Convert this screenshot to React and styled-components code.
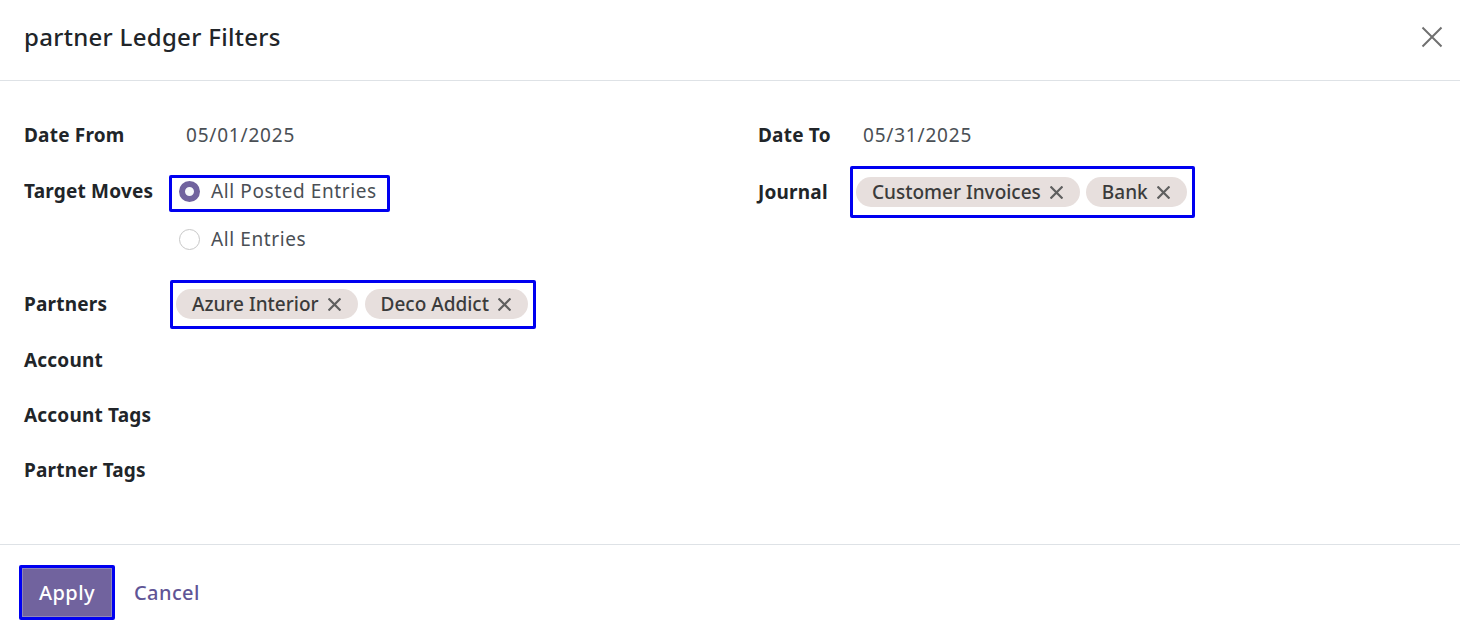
import React from 'react';
import styled, { createGlobalStyle } from 'styled-components';

const GlobalStyle = createGlobalStyle`
  html, body {
    margin: 0;
    padding: 0;
    background: #ffffff;
  }
  body {
    font-family: 'Noto Sans', 'Open Sans', sans-serif;
    color: #212529;
  }
`;

const Modal = styled.div`
  width: 1460px;
  height: 636px;
  display: flex;
  flex-direction: column;
  background: #fff;
`;

const Header = styled.div`
  height: 81px;
  border-bottom: 1px solid #dee2e6;
  display: flex;
  align-items: center;
  justify-content: space-between;
  padding: 0 16px 7px 24px;
  box-sizing: border-box;
`;

const Title = styled.h4`
  margin: 0;
  font-size: 24px;
  font-weight: 500;
  letter-spacing: 0.3px;
  color: #212529;
`;

const CloseButton = styled.button`
  border: none;
  background: none;
  padding: 0;
  width: 24px;
  height: 24px;
  display: flex;
  align-items: center;
  justify-content: center;
  cursor: pointer;
`;

const Body = styled.div`
  flex: 1;
  display: grid;
  grid-template-columns: 1fr 1fr;
  column-gap: 56px;
  padding: 26px 24px 0;
`;

const Column = styled.div`
  display: flex;
  flex-direction: column;
`;

const Row = styled.div`
  display: flex;
  align-items: ${({ $top }) => ($top ? 'flex-start' : 'center')};
  min-height: ${({ $h }) => $h || 55}px;
  padding: ${({ $pad }) => $pad || '0'};
  box-sizing: border-box;
`;

const Label = styled.div`
  width: ${({ $w }) => $w}px;
  flex-shrink: 0;
  font-size: 19px;
  font-weight: 700;
  letter-spacing: 0.2px;
  color: #212529;
  line-height: ${({ $lh }) => ($lh ? `${$lh}px` : 'normal')};
  margin-top: ${({ $mt }) => $mt || 0}px;
`;

const Value = styled.div`
  font-size: 19px;
  color: #4a4f55;
  letter-spacing: 0.8px;
`;

const RadioGroup = styled.div`
  display: flex;
  flex-direction: column;
  align-items: flex-start;
  margin-left: -17px;
  margin-top: 13px;
`;

const RadioOption = styled.label`
  display: flex;
  align-items: center;
  gap: 11px;
  height: ${({ $h }) => $h || 26}px;
  box-sizing: border-box;
  font-size: 19px;
  letter-spacing: 0.6px;
  color: #4a4f55;
  padding-left: ${({ $pl }) => $pl || 0}px;
`;

const Highlight = styled.div`
  display: inline-flex;
  align-items: center;
  border: 3px solid #0000f0;
  border-radius: 2px;
  box-sizing: border-box;
  gap: ${({ $gap }) => $gap || 0}px;
  padding: ${({ $pad }) => $pad || '0'};
  height: ${({ $h }) => ($h ? `${$h}px` : 'auto')};
`;

const RadioCircle = styled.span`
  width: 21px;
  height: 21px;
  border-radius: 50%;
  box-sizing: border-box;
  flex-shrink: 0;
  border: ${({ $checked }) => ($checked ? '6px solid #71639e' : '1px solid #c7c7c7')};
  background: ${({ $checked }) => ($checked ? '#f6f7fa' : '#fff')};
`;

const Tag = styled.span`
  display: inline-flex;
  align-items: center;
  gap: 9px;
  height: 30px;
  padding: 0 17px 0 16px;
  border-radius: 15px;
  background: #e7dfdd;
  color: #3b3b3b;
  font-size: 19px;
  font-weight: 500;
`;

const TagClose = styled.span`
  display: inline-flex;
  width: 13px;
  height: 13px;
`;

const Footer = styled.div`
  height: 92px;
  border-top: 1px solid #dee2e6;
  display: flex;
  align-items: center;
  gap: 19px;
  padding: 4px 19px 0;
  box-sizing: border-box;
`;

const PrimaryButton = styled.button`
  width: 96px;
  height: 55px;
  border: 3px solid #0000f0;
  border-radius: 2px;
  background: #71639e;
  background-clip: padding-box;
  box-shadow: inset 0 0 0 1px #8f86b8;
  color: #fff;
  font-family: inherit;
  font-size: 20px;
  font-weight: 500;
  letter-spacing: 0.4px;
  padding: 0;
`;

const LinkButton = styled.button`
  border: none;
  background: none;
  padding: 0;
  color: #5f5596;
  font-family: inherit;
  font-size: 20px;
  font-weight: 500;
  letter-spacing: 0.4px;
`;

function XIcon({ size, color, width }) {
  return (
    <svg width={size} height={size} viewBox="0 0 20 20">
      <path d="M2 2 L18 18 M18 2 L2 18" stroke={color} strokeWidth={width} strokeLinecap="square" />
    </svg>
  );
}

function TagItem({ children }) {
  return (
    <Tag>
      {children}
      <TagClose>
        <XIcon size={13} color="#5f5f5f" width={3.4} />
      </TagClose>
    </Tag>
  );
}

export default function App() {
  return (
    <Modal>
      <GlobalStyle />
      <Header>
        <Title>partner Ledger Filters</Title>
        <CloseButton aria-label="Close">
          <XIcon size={22} color="#707070" width={1.8} />
        </CloseButton>
      </Header>
      <Body>
        <Column>
          <Row>
            <Label $w={162}>Date From</Label>
            <Value>05/01/2025</Value>
          </Row>
          <Row $top $h={114}>
            <Label $w={162} $lh={26} $mt={16}>Target Moves</Label>
            <RadioGroup>
              <Highlight $pad="0 10px 5px 7px">
                <RadioOption>
                  <RadioCircle $checked />
                  All Posted Entries
                </RadioOption>
              </Highlight>
              <RadioOption $h={48} $pl={10} style={{ marginTop: 3 }}>
                <RadioCircle />
                All Entries
              </RadioOption>
            </RadioGroup>
          </Row>
          <Row $h={56}>
            <Label $w={146}>Partners</Label>
            <Highlight $h={49} $gap={7} $pad="0 5px 0 3px">
              <TagItem>Azure Interior</TagItem>
              <TagItem>Deco Addict</TagItem>
            </Highlight>
          </Row>
          <Row>
            <Label $w={162}>Account</Label>
          </Row>
          <Row>
            <Label $w={162}>Account Tags</Label>
          </Row>
          <Row>
            <Label $w={162}>Partner Tags</Label>
          </Row>
        </Column>
        <Column>
          <Row>
            <Label $w={105}>Date To</Label>
            <Value>05/31/2025</Value>
          </Row>
          <Row $h={62} $pad="4px 0 6px">
            <Label $w={92}>Journal</Label>
            <Highlight $h={52} $gap={6} $pad="0 5px 0 3px">
              <TagItem>Customer Invoices</TagItem>
              <TagItem>Bank</TagItem>
            </Highlight>
          </Row>
        </Column>
      </Body>
      <Footer>
        <PrimaryButton>Apply</PrimaryButton>
        <LinkButton>Cancel</LinkButton>
      </Footer>
    </Modal>
  );
}
